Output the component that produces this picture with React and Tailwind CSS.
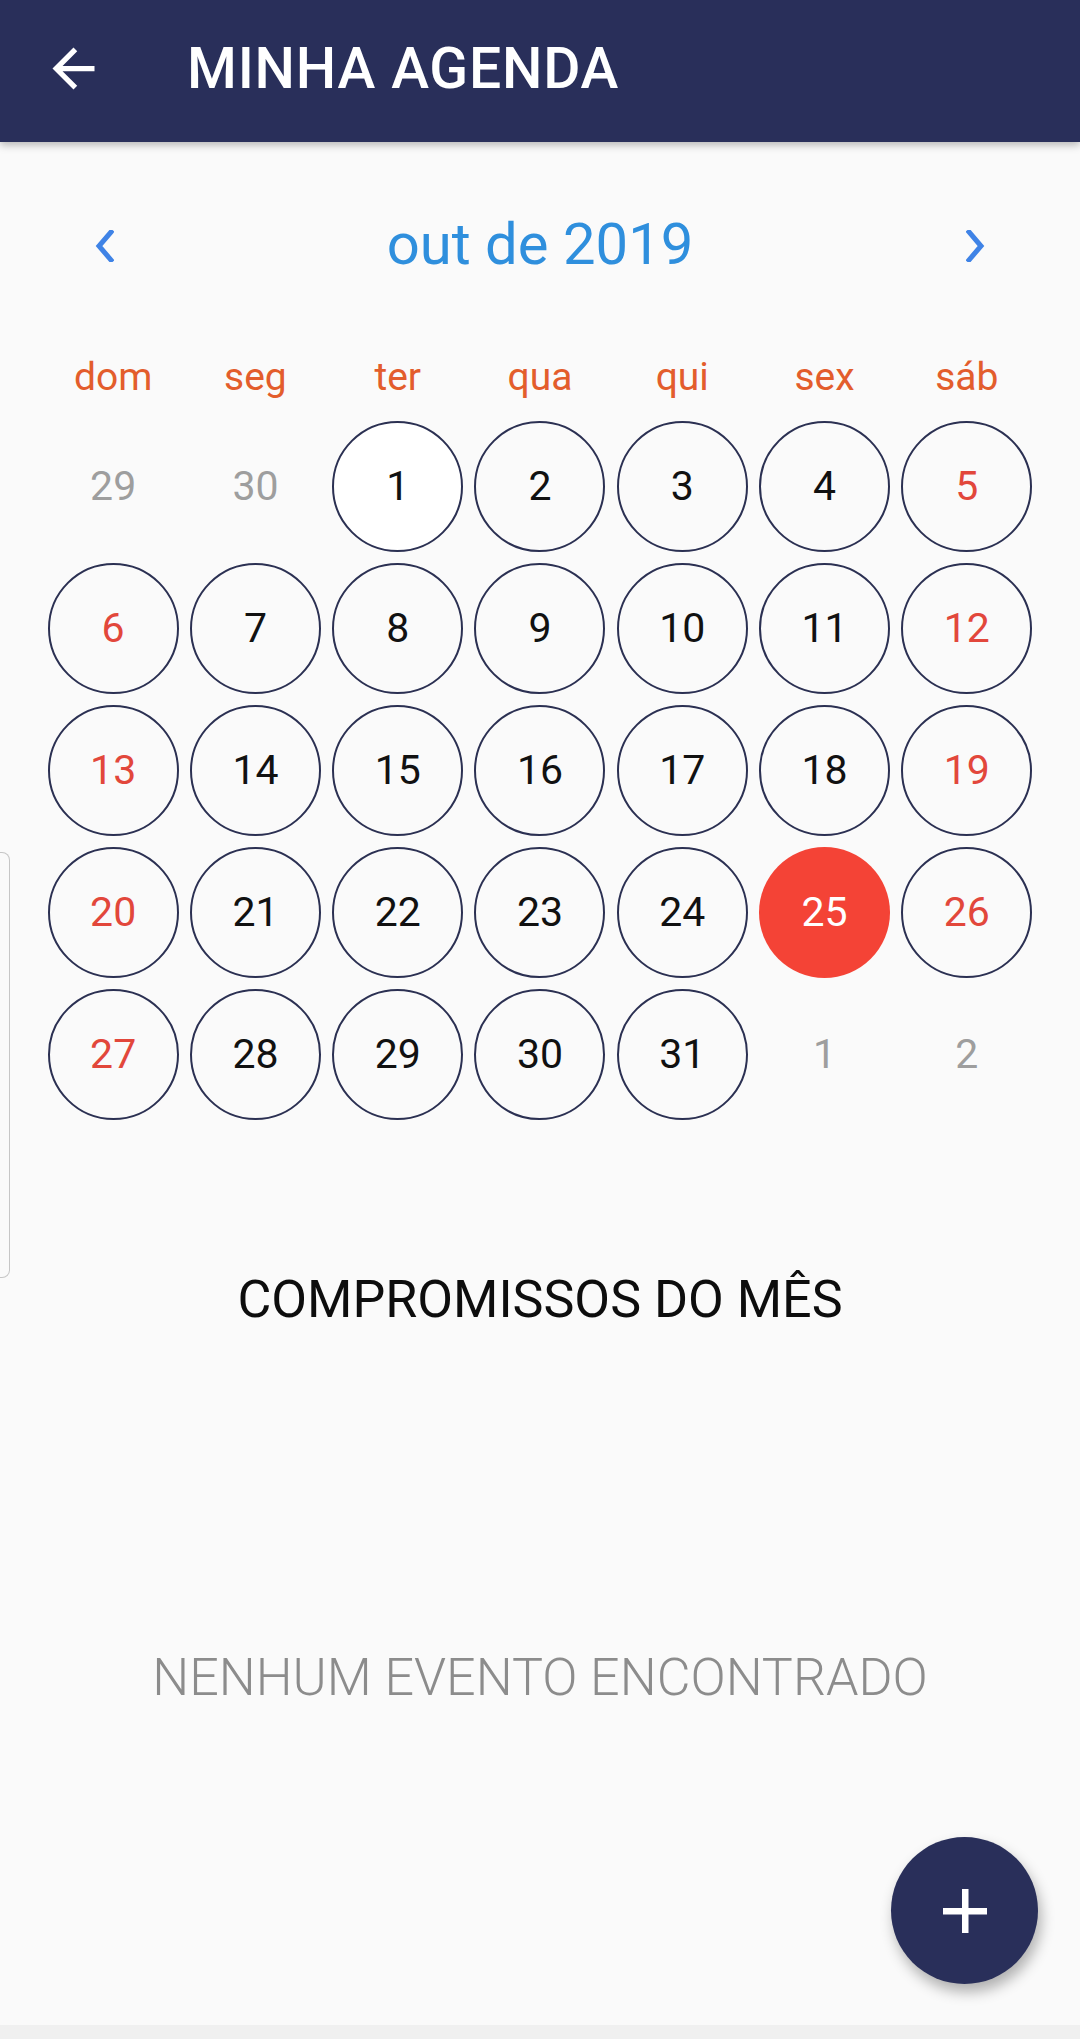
import React from "react";

const weeks = [
  [
    { d: 29, t: "out" },
    { d: 30, t: "out" },
    { d: 1, t: "today" },
    { d: 2 },
    { d: 3 },
    { d: 4 },
    { d: 5, t: "red" },
  ],
  [
    { d: 6, t: "red" },
    { d: 7 },
    { d: 8 },
    { d: 9 },
    { d: 10 },
    { d: 11 },
    { d: 12, t: "red" },
  ],
  [
    { d: 13, t: "red" },
    { d: 14 },
    { d: 15 },
    { d: 16 },
    { d: 17 },
    { d: 18 },
    { d: 19, t: "red" },
  ],
  [
    { d: 20, t: "red" },
    { d: 21 },
    { d: 22 },
    { d: 23 },
    { d: 24 },
    { d: 25, t: "sel" },
    { d: 26, t: "red" },
  ],
  [
    { d: 27, t: "red" },
    { d: 28 },
    { d: 29 },
    { d: 30 },
    { d: 31 },
    { d: 1, t: "out" },
    { d: 2, t: "out" },
  ],
];

const weekdays = ["dom", "seg", "ter", "qua", "qui", "sex", "sáb"];

function Day({ d, t }) {
  if (t === "out") {
    return (
      <div className="flex h-[142px] items-center justify-center">
        <span className="text-[41px] leading-none text-[#9e9e9e]">{d}</span>
      </div>
    );
  }
  let circle = "border-2 border-[#2b3052] bg-transparent text-[#111111]";
  if (t === "today") circle = "border-2 border-[#2b3052] bg-white text-[#111111]";
  if (t === "red") circle = "border-2 border-[#2b3052] bg-transparent text-[#e2473b]";
  if (t === "sel") circle = "bg-[#f44336] text-white";
  return (
    <div className="flex h-[142px] items-center justify-center">
      <div
        className={`flex h-[131px] w-[131px] items-center justify-center rounded-full text-[41px] leading-none ${circle}`}
      >
        {d}
      </div>
    </div>
  );
}

export default function App() {
  return (
    <div className="relative flex h-[2039px] w-[1080px] flex-col overflow-hidden bg-[#fafafa] font-['Roboto','Noto_Sans',sans-serif]">
      {/* Header */}
      <header className="relative z-10 flex h-[142px] shrink-0 items-center bg-[#292f5a] pb-[6px] pl-[42px] shadow-[0_3px_8px_rgba(0,0,0,0.28)]">
        <svg width="63" height="63" viewBox="0 0 24 24" fill="white">
          <path d="M20 11H7.83l5.59-5.59L12 4l-8 8 8 8 1.41-1.41L7.83 13H20v-2z" />
        </svg>
        <h1 className="ml-[82px] text-[57px] font-medium leading-none tracking-[0.8px] text-white">
          MINHA AGENDA
        </h1>
      </header>

      {/* Month navigation */}
      <div className="mt-[54px] flex h-[100px] items-center justify-between px-[95px]">
        <svg width="19" height="32" viewBox="0 0 19 32" fill="none">
          <polyline
            points="16,2 4,16 16,30"
            stroke="#3f83e6"
            strokeWidth="5"
            strokeLinecap="square"
            strokeLinejoin="miter"
          />
        </svg>
        <span className="text-[58px] leading-none text-[#2f8fdd] -translate-y-[2px]">out de 2019</span>
        <svg width="19" height="32" viewBox="0 0 19 32" fill="none">
          <polyline
            points="3,2 15,16 3,30"
            stroke="#3f83e6"
            strokeWidth="5"
            strokeLinecap="square"
            strokeLinejoin="miter"
          />
        </svg>
      </div>

      {/* Calendar */}
      <div className="mx-[42px] mt-[44px] w-[996px]">
        <div className="grid h-[75px] grid-cols-7 items-center">
          {weekdays.map((w) => (
            <div key={w} className="text-center text-[39px] leading-none text-[#e35d2c]">
              {w}
            </div>
          ))}
        </div>
        {weeks.map((row, i) => (
          <div key={i} className="grid grid-cols-7">
            {row.map((c, j) => (
              <Day key={j} d={c.d} t={c.t} />
            ))}
          </div>
        ))}
      </div>

      {/* Section title */}
      <div className="mt-[145px] flex h-[60px] items-center justify-center">
        <h2 className="text-[52px] font-normal leading-none text-[#0d0d0d]">COMPROMISSOS DO MÊS</h2>
      </div>

      <div className="mt-[318px] flex h-[60px] items-center justify-center">
        <p className="text-[52px] font-light leading-none text-[#8c8c8c]">NENHUM EVENTO ENCONTRADO</p>
      </div>

      <div className="flex-1" />
      <div className="h-[14px] shrink-0 bg-[#f0f0f0]" />

      {/* Edge panel handle */}
      <div className="absolute left-0 top-[852px] h-[426px] w-[10px] rounded-r-[8px] border border-l-0 border-[#c6c6c6]" />

      {/* FAB */}
      <button className="absolute left-[891px] top-[1837px] flex h-[147px] w-[147px] items-center justify-center rounded-full bg-[#292f5a] shadow-[3px_8px_14px_rgba(0,0,0,0.3)]">
        <svg width="44" height="44" viewBox="0 0 44 44">
          <rect x="19" y="0" width="6.5" height="44" fill="white" />
          <rect x="0" y="19" width="44" height="6.5" fill="white" />
        </svg>
      </button>
    </div>
  );
}
